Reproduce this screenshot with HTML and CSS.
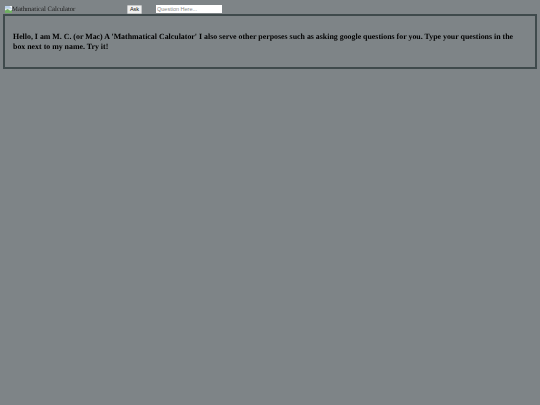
FILE: index.html
```html
<!doctype html>
<html lang="en">
    <head>
        <meta charset="UTF-8" />
        <meta name="viewport" content="width=device-width, initial-scale=1.0" />
        <title>Mathmatical Calculator</title>
        <link rel="stylesheet" href="styles.css">
    </head>
    <body>
        <div class="top-bar">
            <div class="logo">
                <svg class="broken-img" viewBox="0 0 8 8" width="7" height="7" xmlns="http://www.w3.org/2000/svg">
                    <rect x="0" y="0" width="8" height="8" fill="#e8eef0" />
                    <rect x="0" y="0" width="8" height="3" fill="#b9cfe8" />
                    <path d="M0 8 L0 5 L3 3.5 L6 5.5 L8 4.5 L8 8 Z" fill="#6fae62" />
                    <path d="M5 0 L8 0 L8 3 Z" fill="#f4f6f7" />
                </svg>
                <span class="logo-alt">Mathmatical Calculator</span>
            </div>
            <button class="ask-btn">Ask</button>
            <input class="question" type="text" placeholder="Question Here..." />
        </div>

        <div class="intro">
            <p>
                Hello, I am M. C. (or Mac) A 'Mathmatical Calculator' I also serve other perposes such as asking google questions for you. Type your questions in the box next to my name. Try it!
            </p>
        </div>
    </body>
</html>
```

FILE: styles.css
```css
body {
    margin: 0;
    padding: 4px 3px 0;
    background: #7e8487;
    color: #000;
    font-family: "Liberation Serif", serif;
    text-rendering: geometricPrecision;
}

.top-bar {
    display: flex;
    align-items: center;
    height: 10px;
}

.logo {
    display: flex;
    align-items: center;
    width: 124px;
    padding-left: 2px;
    box-sizing: border-box;
    font-size: 6.7px;
    line-height: 8px;
    color: #1c1f20;
}

.logo-alt {
    padding-top: 2px;
    filter: grayscale(1);
}

.ask-btn {
    width: 15px;
    height: 9px;
    margin: 0 14px 0 0;
    padding: 0;
    border: 1px solid #c4c6c7;
    border-radius: 1px;
    background: #efefef;
    color: #111;
    font-family: "Liberation Sans", sans-serif;
    font-size: 5.5px;
    line-height: 7px;
}

.question {
    box-sizing: border-box;
    width: 66px;
    height: 8px;
    padding: 0 1px;
    border: none;
    background: #fff;
    font-family: "Liberation Sans", sans-serif;
    font-size: 5.5px;
}

.question::placeholder {
    color: #8a8a8a;
}

.intro {
    border: 2px solid #3f4a4c;
    height: 51px;
    display: flex;
    align-items: center;
    padding: 0 8px;
}

.intro p {
    margin: 0;
    font-size: 7.89px;
    font-weight: bold;
    line-height: 10px;
    filter: grayscale(1);
}
```
